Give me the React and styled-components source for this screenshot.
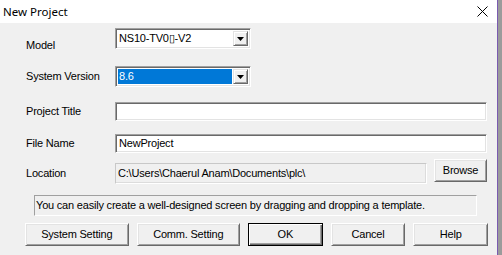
import React from 'react'
import styled, { createGlobalStyle } from 'styled-components'

const Global = createGlobalStyle`
  html, body {
    margin: 0;
    padding: 0;
    background: #9b9b9b;
  }
  body {
    font-family: "Liberation Sans", Arial, sans-serif;
    font-size: 11px;
    line-height: 13px;
    letter-spacing: -0.2px;
    color: #000;
  }
`

const Window = styled.div`
  width: 497px;
  height: 255px;
  background: #f0f0f0;
  border-right: 1px solid #7a5ab0;
  display: flex;
  flex-direction: column;
`

const TitleBar = styled.div`
  height: 23px;
  flex: none;
  background: #fff;
  display: flex;
  align-items: center;
  justify-content: space-between;
  padding: 0 9px 0 3px;
  font-family: "Noto Sans", "Open Sans", sans-serif;
  font-size: 11.5px;
  letter-spacing: 0;
`

const CloseIcon = () => (
  <svg width="11" height="11" viewBox="0 0 11 11">
    <path d="M0.5 0.5 L10.5 10.5 M10.5 0.5 L0.5 10.5" stroke="#000" strokeWidth="1" />
  </svg>
)

const Body = styled.div`
  padding: 5px 9px 0 0;
  display: flex;
  flex-direction: column;
`

const Row = styled.div`
  display: grid;
  grid-template-columns: 115px 1fr;
  align-items: start;
  margin-top: ${p => p.$top || 0}px;
`

const Label = styled.span`
  padding-left: 26px;
  padding-top: ${p => p.$drop || 0}px;
`

const sunken = `
  box-sizing: border-box;
  border-style: solid;
  border-width: 1px;
  border-color: #a0a0a0 #fff #fff #a0a0a0;
  box-shadow: inset 1px 1px 0 #696969, inset -1px -1px 0 #e3e3e3;
`

const Combo = styled.div`
  ${sunken}
  width: 136px;
  height: 21px;
  background: #fff;
  display: flex;
  padding: 2px;
`

const ComboText = styled.div`
  flex: 1;
  display: flex;
  align-items: center;
  padding-left: 1px;
  background: ${p => (p.$selected ? '#0078d7' : 'transparent')};
  color: ${p => (p.$selected ? '#fff' : '#000')};
  margin-right: 1px;
`

const DropButton = styled.div`
  width: 15px;
  box-sizing: border-box;
  background: #f0f0f0;
  border-style: solid;
  border-width: 1px;
  border-color: #e3e3e3 #696969 #696969 #e3e3e3;
  box-shadow: inset 1px 1px 0 #fff, inset -1px -1px 0 #a0a0a0;
  display: flex;
  align-items: center;
  justify-content: center;
`

const Arrow = () => (
  <svg width="7" height="4" viewBox="0 0 7 4">
    <path d="M0 0 H7 L3.5 4 Z" fill="#000" />
  </svg>
)

const TextBox = styled.div`
  ${sunken}
  width: 372px;
  height: 19px;
  background: #fff;
  display: flex;
  align-items: center;
  padding-left: 3px;
`

const LocationWrap = styled.div`
  display: flex;
  align-items: flex-start;
  gap: 7px;
`

const ReadOnly = styled.div`
  box-sizing: border-box;
  width: 312px;
  height: 21px;
  margin-top: 4px;
  border: 1px solid;
  border-color: #c8c8c8 #fff #fff #c8c8c8;
  box-shadow: inset -1px -1px 0 #dcdcdc;
  display: flex;
  align-items: center;
  padding-left: 2px;
  color: #000;
`

const Button = styled.button`
  box-sizing: border-box;
  width: ${p => p.$w}px;
  height: 23px;
  margin: 0;
  padding: 0;
  font: inherit;
  letter-spacing: inherit;
  color: #000;
  background: #f0f0f0;
  border-style: solid;
  border-width: 1px;
  border-color: ${p => (p.$default ? '#000' : '#fff #696969 #696969 #fff')};
  box-shadow: ${p =>
    p.$default
      ? 'inset 1px 1px 0 #fff, inset -1px -1px 0 #696969, inset -2px -2px 0 #a0a0a0'
      : 'inset 1px 1px 0 #e3e3e3, inset -1px -1px 0 #a0a0a0'};
`

const Info = styled.div`
  box-sizing: border-box;
  margin: 11px 0 0 34px;
  width: 443px;
  height: 21px;
  border: 1px solid;
  border-color: #a0a0a0 #fff #fff #a0a0a0;
  display: flex;
  align-items: center;
  padding-left: 1px;
`

const ButtonRow = styled.div`
  display: flex;
  gap: 8px;
  margin: 7px 0 0 25px;
`

export default function App() {
  return (
    <>
      <Global />
      <Window>
        <TitleBar>
          <span>New Project</span>
          <CloseIcon />
        </TitleBar>
        <Body>
          <Row>
            <Label $drop={11}>Model</Label>
            <Combo>
              <ComboText>NS10-TV0▯-V2</ComboText>
              <DropButton><Arrow /></DropButton>
            </Combo>
          </Row>
          <Row $top={14}>
            <Label $drop={4}>System Version</Label>
            <Combo>
              <ComboText $selected>8.6</ComboText>
              <DropButton><Arrow /></DropButton>
            </Combo>
          </Row>
          <Row $top={15}>
            <Label $drop={3}>Project Title</Label>
            <TextBox />
          </Row>
          <Row $top={13}>
            <Label $drop={3}>File Name</Label>
            <TextBox>NewProject</TextBox>
          </Row>
          <Row $top={6}>
            <Label $drop={8}>Location</Label>
            <LocationWrap>
              <ReadOnly>C:\Users\Chaerul Anam\Documents\plc\</ReadOnly>
              <Button $w={53}>Browse</Button>
            </LocationWrap>
          </Row>
          <Info>You can easily create a well-designed screen by dragging and dropping a template.</Info>
          <ButtonRow>
            <Button $w={104}>System Setting</Button>
            <Button $w={104}>Comm. Setting</Button>
            <Button $w={75} $default>OK</Button>
            <Button $w={75}>Cancel</Button>
            <Button $w={75}>Help</Button>
          </ButtonRow>
        </Body>
      </Window>
    </>
  )
}
